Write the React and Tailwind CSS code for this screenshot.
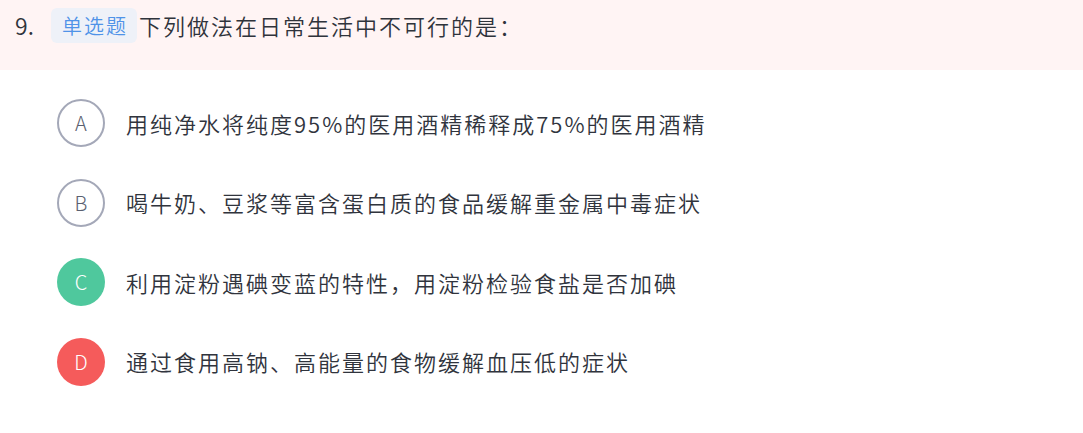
const options = [
  { key: "A", text: "用纯净水将纯度95%的医用酒精稀释成75%的医用酒精", tone: "plain" },
  { key: "B", text: "喝牛奶、豆浆等富含蛋白质的食品缓解重金属中毒症状", tone: "plain" },
  { key: "C", text: "利用淀粉遇碘变蓝的特性，用淀粉检验食盐是否加碘", tone: "right" },
  { key: "D", text: "通过食用高钠、高能量的食物缓解血压低的症状", tone: "wrong" },
];

function Badge({ letter, tone }) {
  const cls =
    tone === "right"
      ? "bg-[#4fc89d] text-white"
      : tone === "wrong"
      ? "bg-[#f55b5b] text-white"
      : "border-2 border-[#a4a8b8] text-[#5a5f70] bg-white";
  return (
    <div className={`w-[48px] h-[48px] rounded-full flex items-center justify-center text-[20px] font-light shrink-0 ${cls}`}>
      {letter}
    </div>
  );
}

export default function App() {
  return (
    <div
      className="w-[1083px] h-[433px] bg-white text-[#2f333b] font-[350]"
      style={{ fontFamily: '"Noto Sans CJK SC", "Noto Sans", sans-serif' }}
    >
      <div className="h-[70px] bg-[#fff4f4] flex items-start pt-[8px] pl-[15px]">
        <div className="h-[35px] flex items-center">
          <span className="text-[23px] leading-none w-[36px]">9.</span>
          <span className="h-[35px] pl-[11px] pr-[9px] rounded-[6px] bg-[#eef1f8] text-[#4f93e8] text-[20px] tracking-[2px] flex items-center">
            单选题
          </span>
          <span className="text-[22px] tracking-[2px] ml-[2px]">下列做法在日常生活中不可行的是：</span>
        </div>
      </div>
      <div className="mt-[29px] pl-[57px] flex flex-col gap-[31.5px]">
        {options.map((o) => (
          <div key={o.key} className="h-[48px] flex items-center gap-[21px]">
            <Badge letter={o.key} tone={o.tone} />
            <span className="text-[22px] tracking-[2px] text-[#30343d]">{o.text}</span>
          </div>
        ))}
      </div>
    </div>
  );
}
